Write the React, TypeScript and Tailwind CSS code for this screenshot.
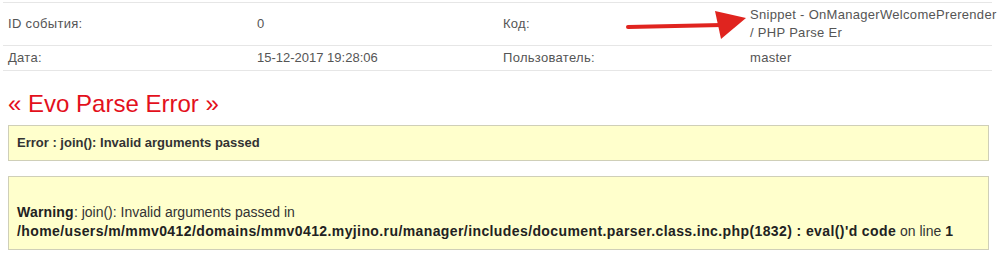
export default function App() {
  const rows = [
    { label: "ID события:", value: "0", label2: "Код:", value2: ["Snippet - OnManagerWelcomePrerender", "/ PHP Parse Er"] },
    { label: "Дата:", value: "15-12-2017 19:28:06", label2: "Пользователь:", value2: ["master"] },
  ];

  return (
    <div className="relative h-[264px] w-[1005px] overflow-hidden bg-white pt-[2px] font-['Liberation_Sans',Arial,sans-serif] text-[13px] leading-[18px] text-[#555]">
      <table className="ml-[3px] w-[989px] table-fixed border-collapse">
        <colgroup>
          <col className="w-[249px]" />
          <col className="w-[246px]" />
          <col className="w-[247px]" />
          <col className="w-[247px]" />
        </colgroup>
        <tbody>
          {rows.map((row) => (
            <tr key={row.label} className="border-y border-[#e6e6e6]">
              <td className="px-[5px] py-[3px] align-middle tracking-[0.3px]">{row.label}</td>
              <td className="px-[5px] py-[3px] align-middle">{row.value}</td>
              <td className="px-[5px] py-[3px] align-middle tracking-[0.3px]">{row.label2}</td>
              <td className="px-[5px] py-[3px] align-middle tracking-[0.3px]">
                {row.value2.map((line) => (
                  <div key={line} className="whitespace-nowrap">{line}</div>
                ))}
              </td>
            </tr>
          ))}
        </tbody>
      </table>

      <h1 className="ml-[8px] mt-[19px] text-[24px] leading-[28px] font-normal text-[#e3101c]">« Evo Parse Error »</h1>

      <div className="ml-[8px] mt-[7px] w-[981px] border border-[#cfcfb8] bg-[#ffffcc] px-[8px] py-[8px] font-bold text-[#333]">
        Error : join(): Invalid arguments passed
      </div>

      <div className="ml-[8px] mt-[15px] w-[981px] border border-[#cfcfb8] bg-[#ffffcc] px-[8px] pt-[7px] pb-[8px] text-[14px] leading-[19px] text-[#333]">
        <div>&nbsp;</div>
        <div>
          <b className="text-[#222] tracking-[0.2px]">Warning</b>: join(): Invalid arguments passed in
        </div>
        <div className="whitespace-nowrap">
          <b className="text-[#222] tracking-[0.4px]">/home/users/m/mmv0412/domains/mmv0412.myjino.ru/manager/includes/document.parser.class.inc.php(1832) : eval()'d code</b> on line <b className="text-[#222]">1</b>
        </div>
      </div>

      <svg className="absolute left-0 top-0" width="1005" height="60" viewBox="0 0 1005 60">
        <line x1="628" y1="27" x2="722" y2="25" stroke="#e0241f" strokeWidth="4" strokeLinecap="round" />
        <polygon points="715,11 746,18 721,39" fill="#e0241f" />
      </svg>
    </div>
  );
}
